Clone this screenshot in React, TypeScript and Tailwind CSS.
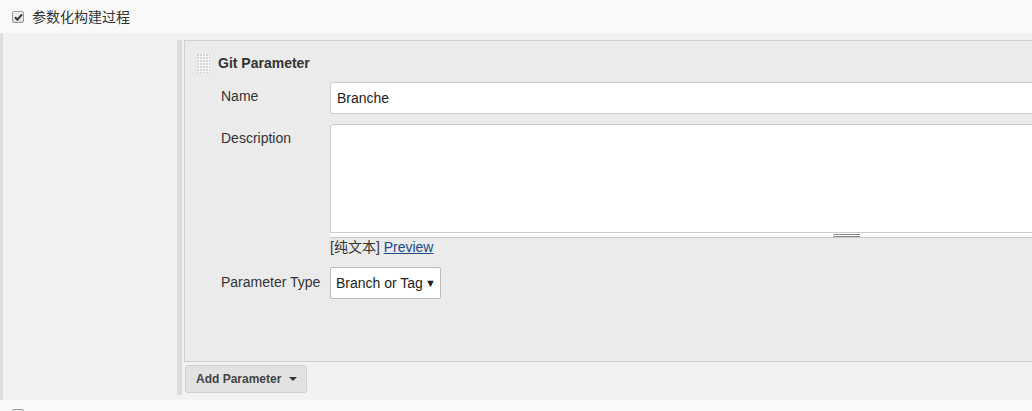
import React from "react";

const font = { fontFamily: '"Liberation Sans", Arial, "Noto Sans CJK SC", sans-serif' };

const Check = ({ checked = true }: { checked?: boolean }) => (
  <span className="flex h-[12px] w-[12px] shrink-0 items-center justify-center rounded-[2px] border border-[#9a9a9a] bg-gradient-to-b from-[#f4f4f4] to-[#dcdcdc]">
    {checked && (
      <svg width="9" height="8" viewBox="0 0 9 8">
        <path d="M1 4.2 L3.4 6.6 L8 1.4" fill="none" stroke="#333" strokeWidth="2" />
      </svg>
    )}
  </span>
);

const Grip = () => (
  <svg width="13" height="19" className="shrink-0">
    <defs>
      <pattern id="dots" width="3" height="3" patternUnits="userSpaceOnUse">
        <rect width="3" height="3" fill="#fafafa" />
        <rect width="2" height="2" fill="#d2d2d2" />
      </pattern>
    </defs>
    <rect width="13" height="19" fill="url(#dots)" />
  </svg>
);

const Row = ({ label, children, pad = "pt-[6px]" }: { label: string; children: React.ReactNode; pad?: string }) => (
  <div className="flex">
    <div className={`w-[109px] shrink-0 text-[14px] leading-[16px] text-[#333] ${pad}`}>{label}</div>
    <div className="flex-1">{children}</div>
  </div>
);

export default function App() {
  return (
    <div className="h-[411px] w-[1032px] overflow-hidden bg-[#f9f9f9]" style={font}>
      <div className="flex h-[33px] items-center gap-[8px] pl-[12px] pt-[1px]">
        <Check />
        <span className="text-[14px] text-[#333]">参数化构建过程</span>
      </div>

      <div className="flex h-[367px] border-l-[3px] border-[#dedede] bg-[#f2f2f2] pt-[7px]">
        <div className="w-[174px] shrink-0" />
        <div className="flex h-[355px]">
          <div className="w-[5px] bg-[#dcdcdc]" />
          <div className="ml-[2px] flex flex-col">
            <div className="h-[322px] w-[1190px] border border-[#d0d0d0] bg-[#ebebeb] pl-[36px] pr-[10px]">
              <div className="-ml-[24px] flex items-center gap-[8px] pt-[12px]">
                <Grip />
                <span className="text-[14px] font-bold text-[#333]">Git Parameter</span>
              </div>

              <div className="mt-[8px] flex flex-col">
                <Row label="Name">
                  <div className="flex h-[32px] items-center rounded-[3px] border border-[#ccc] bg-white px-[6px] text-[14px] text-[#222]">
                    Branche
                  </div>
                </Row>

                <div className="mt-[10px]">
                  <Row label="Description">
                    <div className="h-[109px] rounded-t-[3px] border border-[#ccc] bg-white" />
                    <div className="flex h-[5px] justify-center border-b border-[#c8c8c8] bg-white">
                      <div className="mt-[1px] h-[3px] w-[27px] border-y border-[#8a8a8a]" />
                    </div>
                    <div className="mt-[1px] text-[14px] leading-[16px] text-[#333]">
                      [纯文本] <a className="text-[#204a87] underline">Preview</a>
                    </div>
                  </Row>
                </div>

                <div className="mt-[12px]">
                  <Row label="Parameter Type" pad="pt-[7px]">
                    <div className="flex h-[32px] w-[111px] items-center justify-between rounded-[2px] border border-[#bbb] bg-white pl-[5px] pr-[4px] text-[14px] text-[#222]">
                      <span>Branch or Tag</span>
                      <span className="text-[11px]">▼</span>
                    </div>
                  </Row>
                </div>
              </div>
            </div>

            <div className="ml-[1px] mt-[3px] flex h-[28px] w-[122px] items-center gap-[8px] rounded-[3px] border border-[#cfcfcf] bg-[#e2e2e2] pl-[10px] text-[12px] font-bold text-[#444]">
              Add Parameter
              <svg width="8" height="4" viewBox="0 0 8 4">
                <path d="M0 0 L8 0 L4 4 Z" fill="#333" />
              </svg>
            </div>
          </div>
        </div>
      </div>

      <div className="flex h-[11px] items-start pl-[12px] pt-[9px]">
        <Check checked={false} />
      </div>
    </div>
  );
}
